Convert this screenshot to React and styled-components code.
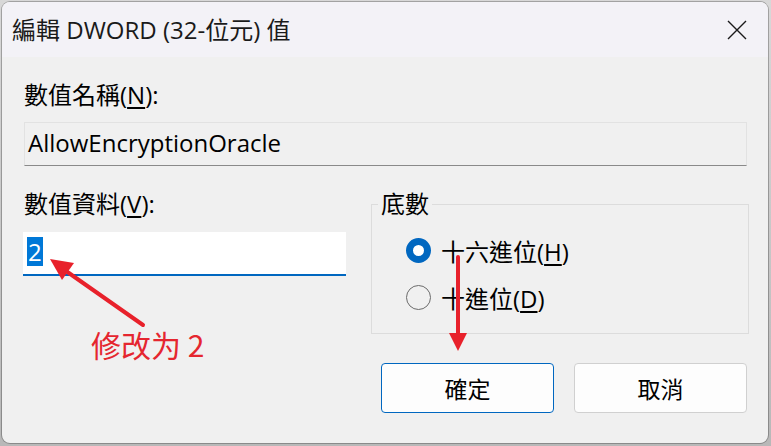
import styled, { createGlobalStyle } from 'styled-components';

const GlobalStyle = createGlobalStyle`
  html, body {
    margin: 0;
    padding: 0;
    background: #a9a9a9;
  }
  #root {
    width: 771px;
    height: 446px;
  }
`;

const Page = styled.div`
  position: relative;
  width: 771px;
  height: 446px;
  padding: 2px 3px 3px 2px;
  box-sizing: border-box;
  background: linear-gradient(#d8d8d8, #b8b8b8);
  font-family: "Open Sans", "Noto Sans CJK TC", sans-serif;
  color: #000;
`;

const Dialog = styled.div`
  width: 766px;
  height: 441px;
  display: flex;
  flex-direction: column;
  border-radius: 8px;
  overflow: hidden;
  background: #f0f0f0;
  box-shadow: 0 0 0 1px rgba(0, 0, 0, 0.25);
`;

const TitleBar = styled.div`
  height: 55px;
  flex-shrink: 0;
  display: flex;
  align-items: center;
  justify-content: space-between;
  padding-left: 10px;
  background: #f3f2f7;
`;

const Title = styled.div`
  font-size: 24px;
  line-height: 30px;
  color: #1a1a1a;
  white-space: nowrap;
`;

const CloseButton = styled.button`
  width: 62px;
  height: 55px;
  border: none;
  background: transparent;
  display: flex;
  align-items: center;
  justify-content: center;
  padding: 0;
`;

const Body = styled.div`
  flex: 1;
  display: flex;
  flex-direction: column;
  padding: 24px 21px 0 22px;
`;

const Label = styled.div`
  height: 28px;
  font-size: 24px;
  line-height: 28px;
  white-space: nowrap;

  u {
    text-underline-offset: 3px;
  }
`;

const NameBox = styled.div`
  margin-top: 13px;
  height: 44px;
  box-sizing: border-box;
  display: flex;
  align-items: center;
  padding: 0 0 3px 3px;
  font-size: 24px;
  background: #f0f0f0;
  border: 1px solid #e2e2e2;
  border-bottom: 1px solid #8a8a8a;
`;

const DataRow = styled.div`
  margin-top: 24px;
  display: grid;
  grid-template-columns: 322px 378px;
  column-gap: 25px;
  align-items: start;
`;

const Column = styled.div`
  display: flex;
  flex-direction: column;
`;

const ValueInput = styled.div`
  margin-top: 14px;
  margin-left: -1px;
  height: 44px;
  box-sizing: border-box;
  display: flex;
  align-items: center;
  padding: 0 0 3px 4px;
  background: #fff;
  border-bottom: 2px solid #0067c0;
  font-size: 24px;
`;

const Selected = styled.span`
  background: #0078d7;
  color: #fff;
  line-height: 29px;
  padding: 0 1px;
`;

const GroupBox = styled.fieldset`
  margin: 0;
  height: 144px;
  box-sizing: border-box;
  padding: 14px 0 0 34px;
  border: 1px solid #dcdcdc;
  display: flex;
  flex-direction: column;
  gap: 11px;
  min-inline-size: 0;
`;

const Legend = styled.legend`
  height: 28px;
  font-size: 24px;
  line-height: 28px;
  padding: 0 3px;
  margin-left: -28px;
`;

const RadioRow = styled.label`
  height: 36px;
  display: flex;
  align-items: center;
  gap: 10px;
  font-size: 24px;
  white-space: nowrap;

  u {
    text-underline-offset: 3px;
  }
`;

const RadioDot = styled.span`
  width: 25px;
  height: 25px;
  box-sizing: border-box;
  border-radius: 50%;
  flex-shrink: 0;
  border: ${(p) => (p.checked ? '7.5px solid #0067c0' : '1.5px solid #6b6b6b')};
  background: ${(p) => (p.checked ? '#fff' : 'transparent')};
`;

const ButtonRow = styled.div`
  margin-top: 29px;
  display: flex;
  justify-content: flex-end;
  gap: 20px;
`;

const Button = styled.button`
  width: 173px;
  height: 50px;
  border-radius: 4px;
  background: #fdfdfd;
  border: 1px solid ${(p) => (p.primary ? '#0067c0' : '#d0d0d0')};
  font-family: inherit;
  font-size: 23px;
  color: #000;
  padding: 0;
`;

const Overlay = styled.svg`
  position: absolute;
  left: 0;
  top: 0;
  pointer-events: none;
`;

const Note = styled.div`
  position: absolute;
  left: 91px;
  top: 325px;
  font-family: "Noto Sans CJK SC", sans-serif;
  font-size: 30px;
  line-height: 38px;
  color: #e5262f;
  white-space: nowrap;
`;

const RED = '#e8212b';

const App = () => {
  return (
    <>
      <GlobalStyle />
      <Page>
        <Dialog>
          <TitleBar>
            <Title>編輯 DWORD (32-位元) 值</Title>
            <CloseButton aria-label="close">
              <svg width="20" height="20" viewBox="0 0 20 20">
                <path d="M1 1 L19 19 M19 1 L1 19" stroke="#1a1a1a" strokeWidth="1.4" fill="none" />
              </svg>
            </CloseButton>
          </TitleBar>
          <Body>
            <Label>
              數值名稱(<u>N</u>):
            </Label>
            <NameBox>AllowEncryptionOracle</NameBox>
            <DataRow>
              <Column>
                <Label>
                  數值資料(<u>V</u>):
                </Label>
                <ValueInput>
                  <Selected>2</Selected>
                </ValueInput>
              </Column>
              <GroupBox>
                <Legend>底數</Legend>
                <RadioRow>
                  <RadioDot checked />
                  <span>
                    十六進位(<u>H</u>)
                  </span>
                </RadioRow>
                <RadioRow>
                  <RadioDot />
                  <span>
                    十進位(<u>D</u>)
                  </span>
                </RadioRow>
              </GroupBox>
            </DataRow>
            <ButtonRow>
              <Button primary>確定</Button>
              <Button>取消</Button>
            </ButtonRow>
          </Body>
        </Dialog>

        <Overlay width="771" height="446" viewBox="0 0 771 446">
          <line x1="143" y1="325" x2="66" y2="271" stroke={RED} strokeWidth="4" strokeLinecap="round" />
          <polygon points="50,259 74,263 62,280" fill={RED} />
          <line x1="458" y1="257" x2="458" y2="336" stroke={RED} strokeWidth="4" strokeLinecap="round" />
          <polygon points="449,333 467,333 458,351" fill={RED} />
        </Overlay>
        <Note>修改为 2</Note>
      </Page>
    </>
  );
};

export default App;
